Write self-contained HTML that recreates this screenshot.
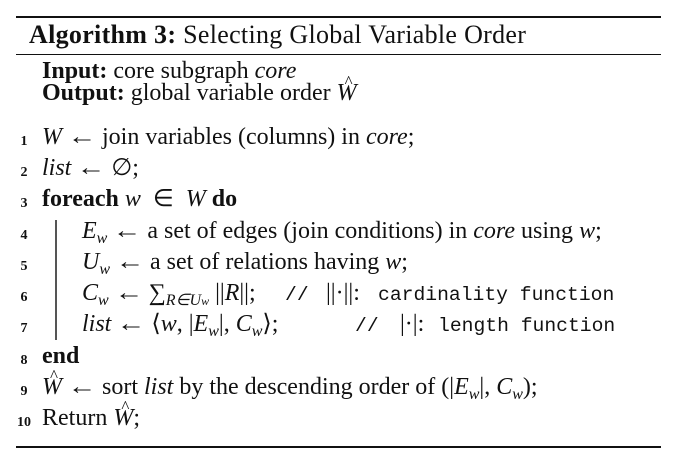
<!DOCTYPE html>
<html><head><meta charset="utf-8"><style>
body{margin:0;width:675px;height:472px;background:#fff;position:relative;overflow:hidden;font-family:"Liberation Serif",serif;color:#111;}
.r{position:absolute;left:16px;width:645px;background:#111;}
.l{position:absolute;font-size:24px;line-height:24px;white-space:nowrap;}
.n{position:absolute;font-size:14px;font-weight:bold;line-height:14px;text-align:center;width:20px;}
.m{font-family:"Liberation Mono",monospace;font-size:19.7px;white-space:nowrap;}
.ma{position:absolute;line-height:20px;}
i{font-style:italic;}
sub{font-size:16px;vertical-align:-5px;line-height:0;font-style:italic;}
.hat{position:relative;display:inline-block;}
.hat::before{content:"^";position:absolute;left:8px;top:-11px;font-style:normal;font-size:17px;}
.a{display:inline-block;transform:scaleX(1.2);margin:0 2px;}
</style></head><body>
<div class="r" style="top:16px;height:2px"></div>
<div class="l" style="left:29px;top:22px;font-size:26px;line-height:26px;letter-spacing:0.3px"><b>Algorithm 3:</b> Selecting Global Variable Order</div>
<div class="r" style="top:54px;height:1.3px"></div>
<div class="l" style="left:42px;top:59px"><b>Input:</b> core subgraph <i>core</i></div>
<div class="l" style="left:42px;top:81px"><b>Output:</b> global variable order <i class="hat">W</i></div>

<div class="n" style="left:14px;top:135px">1</div>
<div class="l" style="left:42px;top:125px"><i>W</i> <span class="a">←</span> join variables (columns) in <i>core</i>;</div>
<div class="n" style="left:14px;top:166px">2</div>
<div class="l" style="left:42px;top:156px"><i>list</i> <span class="a">←</span> ∅;</div>
<div class="n" style="left:14px;top:197px">3</div>
<div class="l" style="left:42px;top:187px"><b>foreach</b> <i>w</i> &nbsp;∈ &nbsp;<i>W</i> <b>do</b></div>
<div style="position:absolute;left:55px;top:220px;width:1.5px;height:120px;background:#555"></div>
<div class="n" style="left:14px;top:229px">4</div>
<div class="l" style="left:82px;top:219px"><i>E</i><sub>w</sub> <span class="a">←</span> a set of edges (join conditions) in <i>core</i> using <i>w</i>;</div>
<div class="n" style="left:14px;top:260px">5</div>
<div class="l" style="left:82px;top:250px"><i>U</i><sub>w</sub> <span class="a">←</span> a set of relations having <i>w</i>;</div>
<div class="n" style="left:14px;top:291px">6</div>
<div class="l" style="left:82px;top:281px"><i>C</i><sub>w</sub> <span class="a">←</span> ∑<sub>R∈U<span style="font-size:12px">w</span></sub> ||<i>R</i>||;</div>
<div class="m ma" style="left:285px;top:285px">//</div>
<div class="l" style="left:326px;top:281px">||·||:</div>
<div class="m ma" style="left:378px;top:285px">cardinality function</div>
<div class="n" style="left:14px;top:322px">7</div>
<div class="l" style="left:82px;top:312px"><i>list</i> <span class="a">←</span> ⟨<i>w</i>, |<i>E</i><sub>w</sub>|, <i>C</i><sub>w</sub>⟩;</div>
<div class="m ma" style="left:355px;top:316px">//</div>
<div class="l" style="left:400px;top:312px">|·|:</div>
<div class="m ma" style="left:438px;top:316px">length function</div>
<div class="n" style="left:14px;top:354px">8</div>
<div class="l" style="left:42px;top:344px"><b>end</b></div>
<div class="n" style="left:14px;top:385px">9</div>
<div class="l" style="left:42px;top:375px"><i class="hat">W</i> <span class="a">←</span> sort <i>list</i> by the descending order of (|<i>E</i><sub>w</sub>|, <i>C</i><sub>w</sub>);</div>
<div class="n" style="left:14px;top:416px">10</div>
<div class="l" style="left:42px;top:406px">Return <i class="hat">W</i>;</div>
<div class="r" style="top:446px;height:2px"></div>
</body></html>
